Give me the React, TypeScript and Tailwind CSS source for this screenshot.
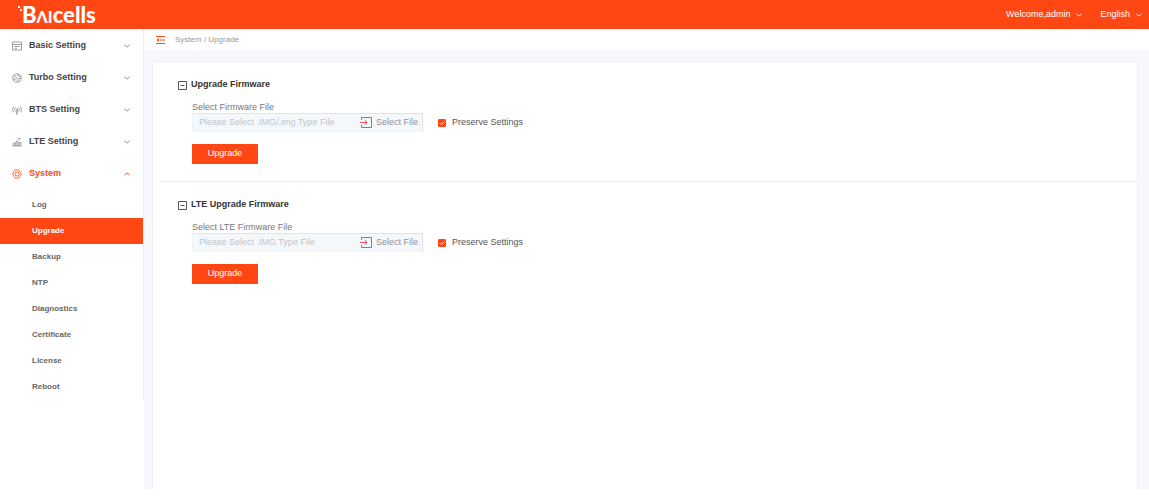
import { useState } from "react";

const menuItems = [
  { name: "Basic Setting", icon: "basic" },
  { name: "Turbo Setting", icon: "turbo" },
  { name: "BTS Setting", icon: "bts" },
  { name: "LTE Setting", icon: "lte" },
  { name: "System", icon: "system" },
];

const systemItems = [
  "Log",
  "Upgrade",
  "Backup",
  "NTP",
  "Diagnostics",
  "Certificate",
  "License",
  "Reboot",
];

function MenuIcon({ name }: { name: string }) {
  return (
    <svg
      viewBox="0 0 20 20"
      className="h-[10px] w-[10px] shrink-0"
      fill="none"
      stroke="currentColor"
      strokeWidth="1.6"
    >
      {name === "basic" && (
        <path d="M1 2h18v16H1zM1 7h18M5 11h10M5 14.500h5" />
      )}
      {name === "turbo" && (
        <>
          <circle cx="10" cy="10" r="8.500" />
          <path d="M3 5l5 2 1 4-4 2-3-2M11 2l1 4 5 1M18 11l-5 0-2 3 2 4" />
        </>
      )}
      {name === "bts" && (
        <>
          <path d="M4 3c-4 3-4 9 0 12M7 5c-2 2-2 6 0 8M16 3c4 3 4 9 0 12M13 5c2 2 2 6 0 8" />
          <path d="M10 7v12" strokeWidth="2.600" />
        </>
      )}
      {name === "lte" && (
        <path d="M1 18h18M2.500 18v-6h3.500v6M8 18V9h3.500v9M14 18v-7h3.500v7M11 4c2-2 5-2 7 0M13 6.500c1-1 2-1 3 0" />
      )}
      {name === "system" && (
        <>
          <path d="M6 2h8l5 8-5 8H6l-5-8z" strokeLinejoin="round" />
          <circle cx="10" cy="10" r="4" />
        </>
      )}
    </svg>
  );
}

function Chevron({ up = false }: { up?: boolean }) {
  return (
    <svg
      viewBox="0 0 6 4"
      className="h-1 w-[6px] shrink-0"
      fill="none"
      stroke="currentColor"
      strokeWidth="0.9"
    >
      <path d={up ? "M0.400 3.200L3 0.900l2.600 2.300" : "M0.400 0.800L3 3.100l2.600-2.300"} />
    </svg>
  );
}

function Logo() {
  return (
    <div className="flex items-center font-[Lato,sans-serif] text-white">
      <svg viewBox="0 0 4 17" className="h-[17px] w-1" fill="currentColor">
        <path d="M0 0h2v2H0zM2 3h2v2H2z" />
      </svg>
      <span className="text-[22px] leading-7 font-black">B</span>
      <span className="pt-1 text-base leading-6 font-black">ΛI</span>
      <span className="text-[22px] leading-7 font-black">cells</span>
    </div>
  );
}

interface UpgradeSectionProps {
  id: string;
  title: string;
  label: string;
  placeholder: string;
}

function UpgradeSection({ id, title, label, placeholder }: UpgradeSectionProps) {
  const [open, setOpen] = useState(true);
  const [preserve, setPreserve] = useState(true);

  return (
    <section className="pt-4 pr-6 pb-[17px] pl-[25px]">
      <h2>
        <button
          type="button"
          onClick={() => setOpen(!open)}
          className="flex h-[14px] items-center gap-1 text-[9px] font-bold text-[#333333]"
        >
          <svg
            viewBox="0 0 9 9"
            className="h-[9px] w-[9px] text-[#555555]"
            fill="none"
            stroke="currentColor"
          >
            <path d="M0.500 0.500h8v8h-8zM2.500 4.500h4" />
            {!open && <path d="M4.500 2.500v4" />}
          </svg>
          {title}
        </button>
      </h2>

      {open && (
        <form className="pt-2 pl-[14px]" onSubmit={(e) => e.preventDefault()}>
          <label htmlFor={id} className="block h-[13px] text-[9px] leading-[14px] text-[#777777]">
            {label}
          </label>
          <div className="flex items-center gap-[15px]">
            <div className="flex h-[19px] w-[231px] border border-[#f0f3f6] border-t-[#e0e4e8] border-r-[#e0e4e8] bg-[#f5f8fb]">
              <input
                id={id}
                type="text"
                readOnly
                placeholder={placeholder}
                className="min-w-0 flex-1 pl-[6px] text-[9px] outline-none placeholder:text-[#bfc4cc]"
              />
              <button
                type="button"
                className="flex items-center gap-1 pr-1 text-[9px] text-[#909399]"
              >
                <svg
                  viewBox="0 0 12 11"
                  className="h-[11px] w-3 text-[#f0505a]"
                  fill="none"
                  stroke="currentColor"
                >
                  <path d="M1.500 3V0.500h10v10h-10V8M0 5.500h7M4.800 3.200l2.400 2.300-2.400 2.300" />
                </svg>
                Select File
              </button>
            </div>
            <label className="flex items-center gap-[6px] text-[9px] text-[#555555]">
              <span className="relative h-2 w-2">
                <input
                  type="checkbox"
                  checked={preserve}
                  onChange={(e) => setPreserve(e.target.checked)}
                  className="block h-2 w-2 appearance-none rounded-[1px] border border-[#ff4713] checked:bg-[#ff4713]"
                />
                {preserve && (
                  <svg
                    viewBox="0 0 8 8"
                    className="pointer-events-none absolute inset-0"
                    fill="none"
                    stroke="white"
                  >
                    <path d="M1.800 4l1.600 1.600L6.300 2.500" />
                  </svg>
                )}
              </span>
              Preserve Settings
            </label>
          </div>
          <button
            type="submit"
            className="mt-3 flex h-5 w-[66px] items-center justify-center bg-[#ff4713] text-[9px] text-white hover:bg-[#e63e0f]"
          >
            Upgrade
          </button>
        </form>
      )}
    </section>
  );
}

export default function App() {
  const [active, setActive] = useState("Upgrade");
  const [systemOpen, setSystemOpen] = useState(true);

  return (
    <div className="flex min-h-screen flex-col bg-white pb-2 font-['Liberation_Sans',Arial,sans-serif]">
      <header className="flex h-[29px] items-center justify-between bg-[#ff4713] pr-[7px] pl-[18px]">
        <Logo />
        <div className="flex items-center gap-[18px] text-[9px] text-white">
          <button type="button" className="flex items-center gap-[6px]">
            Welcome,admin
            <Chevron />
          </button>
          <button type="button" className="flex items-center gap-[6px]">
            English
            <Chevron />
          </button>
        </div>
      </header>

      <div className="flex flex-1">
        <nav className="w-36 shrink-0">
          <div className="border-r border-[#ececf2] pt-px">
            {menuItems.map((item) => {
              const isSystem = item.name === "System";
              return (
                <button
                  key={item.name}
                  type="button"
                  onClick={() => isSystem && setSystemOpen(!systemOpen)}
                  className={`flex h-8 w-full items-center pr-[13px] pl-3 ${
                    isSystem ? "text-[#ff4713]" : "text-[#888888]"
                  }`}
                >
                  <MenuIcon name={item.icon} />
                  <span
                    className={`flex-1 pl-[7px] text-left text-[9px] font-bold ${
                      isSystem ? "text-[#ff4713]" : "text-[#444444]"
                    }`}
                  >
                    {item.name}
                  </span>
                  <Chevron up={isSystem && systemOpen} />
                </button>
              );
            })}
            {systemOpen && (
              <ul className="pt-[2px]">
                {systemItems.map((item) => (
                  <li key={item}>
                    <a
                      href="#"
                      onClick={() => setActive(item)}
                      className={`flex h-[26px] items-center pl-8 text-[8px] font-bold ${
                        item === active ? "bg-[#ff4713] text-white" : "text-[#666666]"
                      }`}
                    >
                      {item}
                    </a>
                  </li>
                ))}
              </ul>
            )}
          </div>
        </nav>

        <div className="flex min-w-0 flex-1 flex-col bg-[#f7f7fc]">
          <div className="flex h-[21px] items-center gap-[10px] bg-white pl-3 text-[8px] text-[#999999]">
            <button type="button" aria-label="Toggle menu" className="text-[#ff4713]">
              <svg viewBox="0 0 9 8" className="h-2 w-[9px]" fill="none" stroke="currentColor">
                <path d="M0 0.500h9M4 4h5M0 7.500h9" />
                <path d="M3 2v4L0.500 4z" fill="currentColor" stroke="none" />
              </svg>
            </button>
            <span>System / Upgrade</span>
          </div>

          <main className="mt-[11px] mr-[11px] ml-2 flex-1 border border-b-0 border-[#efeff5] bg-white">
            <UpgradeSection
              id="firmware"
              title="Upgrade Firmware"
              label="Select Firmware File"
              placeholder="Please Select .IMG/.img Type File"
            />
            <hr className="ml-2 border-[#ececf0]" />
            <UpgradeSection
              id="lte-firmware"
              title="LTE Upgrade Firmware"
              label="Select LTE Firmware File"
              placeholder="Please Select .IMG Type File"
            />
          </main>
        </div>
      </div>
    </div>
  );
}
